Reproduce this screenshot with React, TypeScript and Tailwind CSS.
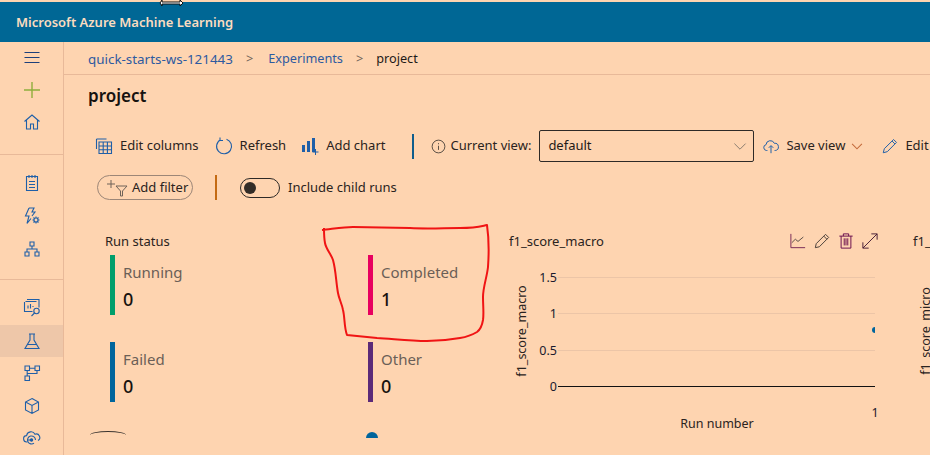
import React from 'react';

const font = { fontFamily: '"Noto Sans", "Open Sans", sans-serif' };

const Ico: React.FC<{ size?: number; color?: string; children: React.ReactNode }> = ({ size = 20, color = '#1f5fa8', children }) => (
  <svg width={size} height={size} viewBox="0 0 20 20" fill="none" stroke={color} strokeWidth="1.1" className="shrink-0">
    {children}
  </svg>
);

const NavItem: React.FC<{ active?: boolean; children: React.ReactNode }> = ({ active, children }) => (
  <div className={`flex h-[32px] items-center justify-center ${active ? 'bg-[#eec7a9]' : ''}`}>{children}</div>
);

const Sidebar: React.FC = () => (
  <aside className="flex w-[64px] shrink-0 flex-col border-r border-[#e8b999]">
    <NavItem>
      <Ico color="#1d3f7a"><path d="M2.500 4.500h15M2.500 9.500h15M2.500 14.500h15" /></Ico>
    </NavItem>
    <NavItem>
      <Ico color="#8fae3c"><path d="M10 2v16M2 10h16" strokeWidth="1.400" /></Ico>
    </NavItem>
    <NavItem>
      <Ico><path d="M2.500 9.500 10 3l7.500 6.500M4.500 8v9h4v-5h3v5h4V8" /></Ico>
    </NavItem>
    <div className="mt-[16px] mb-[12px] border-t border-[#e8b999]" />
    <NavItem>
      <Ico><path d="M4.500 3.500h11v14h-11zM7 2v3M10 2v3M13 2v3M7 8.500h6M7 11.500h6M7 14.500h6" /></Ico>
    </NavItem>
    <div className="h-px" />
    <NavItem>
      <Ico>
        <path d="M7 2h5l-2 4h3l-3 4M7 2 3.500 10H7l-2 7.500 4-5" />
        <circle cx="14" cy="14" r="2" />
        <path d="M14 10.500v1.500M14 16v1.500M10.500 14H12M16 14h1.500M11.500 11.500l1 1M15.500 15.500l1 1M16.500 11.500l-1 1M12.500 15.500l-1 1" />
      </Ico>
    </NavItem>
    <div className="h-px" />
    <NavItem>
      <Ico><path d="M8 3h4v4H8zM3 13h4v4H3zM13 13h4v4h-4zM10 7v3M5 13v-3h10v3" /></Ico>
    </NavItem>
    <div className="mt-[14px] mb-[11px] border-t border-[#e8b999]" />
    <NavItem>
      <Ico><path d="M5 2.500h12v8M3.500 4.500h11M2.500 5v9.500h8M6 8.500v3M8.500 7v4.500M11 9v1" /><circle cx="14.500" cy="14" r="2.700" /><path d="m12.500 16-3 3" /></Ico>
    </NavItem>
    <div className="h-[2px]" />
    <NavItem active>
      <Ico><path d="M7 3h6M8 3v6l-5 8.500h14L12 9V3M5.500 13.500h9" /></Ico>
    </NavItem>
    <NavItem>
      <Ico><path d="M3 3h4.500v4.500H3zM13 3h4.500v4.500H13zM3 13h4.500v4.500H3zM7.500 5.200H13M5.200 7.500V13M15 7.500v3H5.200" /></Ico>
    </NavItem>
    <div className="h-px" />
    <NavItem>
      <Ico><path d="M10 2.500 16.500 6v8L10 17.500 3.500 14V6zM3.500 6 10 9.500 16.500 6M10 9.500v8" /></Ico>
    </NavItem>
    <NavItem>
      <Ico><path d="M5.500 14H5a3.200 3.200 0 0 1-.4-6.400A4.500 4.500 0 0 1 13 6.200a3.500 3.500 0 0 1 3 6.300" /><path d="M13.500 12a4 4 0 1 0-1.500 3.100" /><circle cx="9.500" cy="12" r="1.200" fill="#1f5fa8" /><path d="M5.500 12h4" /></Ico>
    </NavItem>
  </aside>
);

const ToolButton: React.FC<{ icon: React.ReactNode; label: string; className?: string }> = ({ icon, label, className = '' }) => (
  <div className={`flex shrink-0 items-center gap-[6px] ${className}`}>
    {icon}
    <span className="text-[13px] whitespace-nowrap text-[#2a2320]">{label}</span>
  </div>
);

const Toolbar: React.FC = () => (
  <div className="mt-[21px] flex h-[34px] items-center pl-[30px] whitespace-nowrap">
    <ToolButton
      label="Edit columns"
      icon={
        <Ico size={20}>
          <path d="M2.500 3h10M2.500 3v10M5 6h12.500v11.500H5zM5 10h12.500M5 13.800h12.500M9.200 6v11.500M13.400 6v11.500" />
        </Ico>
      }
    />
    <ToolButton
      className="ml-[15px]"
      label="Refresh"
      icon={
        <Ico size={20}>
          <path d="M12.500 3.200a7.500 7.500 0 1 1-6 .5M6 1.500v3h3" />
        </Ico>
      }
    />
    <ToolButton
      className="ml-[14px]"
      label="Add chart"
      icon={
        <svg width="20" height="20" viewBox="0 0 20 20" className="shrink-0">
          <path d="M2 9h3v7H2zM7 5h3v11H7zM12 2h3v14h-3z" fill="#1f5fa8" />
          <path d="M15.500 13v6M12.500 16h6" stroke="#1f5fa8" fill="none" />
        </svg>
      }
    />
    <div className="mr-[17px] ml-[27px] h-[25px] w-[2px] bg-[#0f5d8c]" />
    <Ico size={15} color="#3a342f">
      <circle cx="10" cy="10" r="8.500" />
      <path d="M10 9v5.500M10 5.500v1.500" />
    </Ico>
    <span className="ml-[4px] text-[13px] text-[#2a2320]">Current view:</span>
    <div className="ml-[8px] flex h-[32px] w-[215px] shrink-0 items-center justify-between rounded-[2px] border border-[#2e2a27] pr-[5px] pl-[8px] text-[13px] text-[#1e1a18]">
      default
      <Ico size={16} color="#7b7268"><path d="m3 7 7 7 7-7" /></Ico>
    </div>
    <ToolButton
      className="ml-[8px]"
      label="Save view"
      icon={
        <Ico size={18}>
          <path d="M6 15H5a3.300 3.300 0 0 1-.5-6.500A4.800 4.800 0 0 1 13.700 7a3.900 3.900 0 0 1 1 8H14M10 18v-8M7.500 12 10 9.500l2.500 2.500" />
        </Ico>
      }
    />
    <div className="mr-[17px] ml-[5px]">
      <Ico size={14} color="#c46a3b"><path d="m3 7 7 7 7-7" strokeWidth="1.500" /></Ico>
    </div>
    <ToolButton
      label="Edit"
      icon={
        <Ico size={18}>
          <path d="m2.500 17.500 1.200-4.500L14 2.800l3.200 3.200L7 16.300zM12.300 4.500l3.200 3.200" />
        </Ico>
      }
    />
  </div>
);

const FilterRow: React.FC = () => (
  <div className="mt-[12px] flex h-[25px] items-center pl-[33px]">
    <div className="flex h-[25px] w-[96px] items-center rounded-full border border-[#9c8677] pl-[8px] text-[13px] text-[#2a2320]">
      <svg width="26" height="18" viewBox="0 0 26 18" fill="none" stroke="#6f6359" strokeWidth="1" className="shrink-0">
        <path d="M5 1v8M1 5h8M10 7h11l-4.500 5v5h-2v-5z" />
      </svg>
      Add filter
    </div>
    <div className="mr-[23px] ml-[22px] h-[25px] w-[2px] bg-[#c46a12]" />
    <div className="flex h-[20px] w-[40px] items-center rounded-full border border-[#2e2a27] pl-[3px]">
      <div className="h-[12px] w-[12px] rounded-full bg-[#332d28]" />
    </div>
    <span className="ml-[8px] text-[13px] text-[#2a2320]">Include child runs</span>
  </div>
);

const StatusCard: React.FC<{ label: string; value: string; bar: string }> = ({ label, value, bar }) => (
  <div className="flex h-[60px] items-stretch">
    <div className={`w-[5px] ${bar}`} />
    <div className="ml-[8px] flex flex-col">
      <span className="mt-[7px] text-[15px] leading-[20px] text-[#6b5f57]">{label}</span>
      <span className="mt-[5px] text-[18px] leading-[24px] font-medium text-[#17120f]">{value}</span>
    </div>
  </div>
);

const RunStatus: React.FC = () => (
  <section className="w-[445px] shrink-0 pl-[41px]">
    <h3 className="h-[21px] text-[13px] leading-[15px] font-normal text-[#2a2320]">Run status</h3>
    <div className="ml-[5px] grid grid-cols-[258px_1fr] gap-y-[27px]">
      <StatusCard label="Running" value="0" bar="bg-[#009e6b]" />
      <StatusCard label="Completed" value="1" bar="bg-[#e8005f]" />
      <StatusCard label="Failed" value="0" bar="bg-[#00659c]" />
      <StatusCard label="Other" value="0" bar="bg-[#5b2a78]" />
      <div className="mt-[2px] ml-[-20px] h-[8px] w-[36px] rounded-t-[50%] border-t border-[#3a342f]" />
      <div className="mt-[3px] ml-[-2px] h-[6px] w-[12px] rounded-t-full bg-[#00659c]" />
    </div>
  </section>
);

const ChartIcons: React.FC = () => (
  <div className="-mt-px flex w-[88px] shrink-0 items-center gap-[8px]">
    <svg width="16" height="16" viewBox="0 0 18 18" fill="none" stroke="#7a2b57" strokeWidth="1.100" className="shrink-0">
      <path d="M1 1v15.500h16" />
      <path d="m2 11 4-4 3 2.500 6-5" stroke="#5c5048" />
    </svg>
    <svg width="16" height="16" viewBox="0 0 18 18" fill="none" stroke="#4a3f39" strokeWidth="1.100" className="shrink-0">
      <path d="m1.500 16.500 1-4.500L13 1.500l3.500 3.500L6 15.500zM11 3.500l3.500 3.500" />
    </svg>
    <svg width="16" height="16" viewBox="0 0 18 18" fill="none" stroke="#6b0f4e" strokeWidth="1.100" className="shrink-0">
      <path d="M1.500 3.500h15M6 3.500V1h6v2.500M3.500 3.500V17h11V3.500M7 6v8M9 6v8M11 6v8" />
    </svg>
    <svg width="16" height="16" viewBox="0 0 18 18" fill="none" stroke="#4a2138" strokeWidth="1.100" className="shrink-0">
      <path d="M1 17 17 1M10.500 1H17v6.500M1 10.500V17h6.500" />
    </svg>
  </div>
);

const Chart: React.FC = () => (
  <section className="w-[421px] shrink-0">
    <div className="flex h-[20px] items-start">
      <h3 className="w-[281px] shrink-0 text-[13px] leading-[15px] font-normal text-[#2a2320]">f1_score_macro</h3>
      <ChartIcons />
      <h3 className="ml-[35px] shrink-0 text-[13px] leading-[15px] font-normal whitespace-nowrap text-[#2a2320]">f1_score_micro</h3>
    </div>
    <svg width="425" height="200" viewBox="0 0 425 200" className="-mt-[1px]" style={font}>
      <g stroke="#ecc5a7" strokeWidth="1">
        <path d="M49 24.500h317M49 60.500h317M49 97.500h317" />
      </g>
      <path d="M49 133.500h317" stroke="#111" strokeWidth="1" />
      <g fontSize="12.500" fill="#1a1a2e" textAnchor="end">
        <text x="48" y="29">1.5</text>
        <text x="48" y="65">1</text>
        <text x="48" y="102">0.5</text>
        <text x="48" y="138">0</text>
      </g>
      <text x="366" y="164" fontSize="12.500" fill="#1a1a2e" textAnchor="middle">1</text>
      <text x="208" y="175" fontSize="12.500" fill="#2a2320" textAnchor="middle">Run number</text>
      <text transform="translate(17 78) rotate(-90)" fontSize="12.500" fill="#2a2320" textAnchor="middle">f1_score_macro</text>
      <text transform="translate(421 78) rotate(-90)" fontSize="12.500" fill="#2a2320" textAnchor="middle">f1_score_micro</text>
      <path d="M366 74a3 3 0 0 0-3 3 3 3 0 0 0 3 3z" fill="#00659c" />
    </svg>
  </section>
);

const App: React.FC = () => {
  return (
    <div className="relative h-[455px] w-[930px] overflow-hidden bg-[#fed4b0] pt-[2px]" style={font}>
      <header className="flex h-[40px] items-center bg-[#006795] pt-[2px] pl-[16px] text-[13px] font-semibold text-[#fbdcc0]">
        Microsoft Azure Machine Learning
      </header>
      <div className="flex h-[413px]">
        <Sidebar />
        <main className="min-w-0 flex-1">
          <nav className="flex h-[33px] items-center border-b border-[#e8b999] pt-[2px] pl-[24px] text-[12.700px]">
            <span className="text-[13.400px] text-[#2d5aa0]">quick-starts-ws-121443</span>
            <span className="mr-[15px] ml-[13px] text-[#6f6359]">&gt;</span>
            <span className="text-[#2d5aa0]">Experiments</span>
            <span className="mr-[13px] ml-[13px] text-[#6f6359]">&gt;</span>
            <span className="text-[#1e1a18]">project</span>
          </nav>
          <h1 className="mt-[9px] pl-[24px] text-[17px] leading-[24px] font-semibold text-[#17120f]">project</h1>
          <Toolbar />
          <FilterRow />
          <div className="mt-[34px] flex">
            <RunStatus />
            <Chart />
          </div>
        </main>
      </div>
      <svg width="930" height="455" viewBox="0 0 930 455" fill="none" className="pointer-events-none absolute inset-0">
        <path
          d="M322 230c10-1 22-3 31-3l57 1c18 1 34 0 50 0s18-1 27-3c2 14 2 28 1 42-1 10-5 20-5 30s1 16 0 23c-1 6-2 9-6 12-5 3-11 5-17 6-11 2-22 3-33 3-17 0-33-2-50-3-10-1-20-2-30-3-3-8-2-17-4-25-1-6-4-11-5-17-2-11-2-22-5-33-2-6-7-11-8-17-1-5-1-10-1-15"
          stroke="#f01414"
          strokeWidth="2"
          strokeLinejoin="round"
        />
        <path d="M162 0l-2 3 2 3v-2h18v2l3-3-3-3v2h-18z" fill="#fff" stroke="#111" strokeWidth="1" />
      </svg>
    </div>
  );
};

export default App;
